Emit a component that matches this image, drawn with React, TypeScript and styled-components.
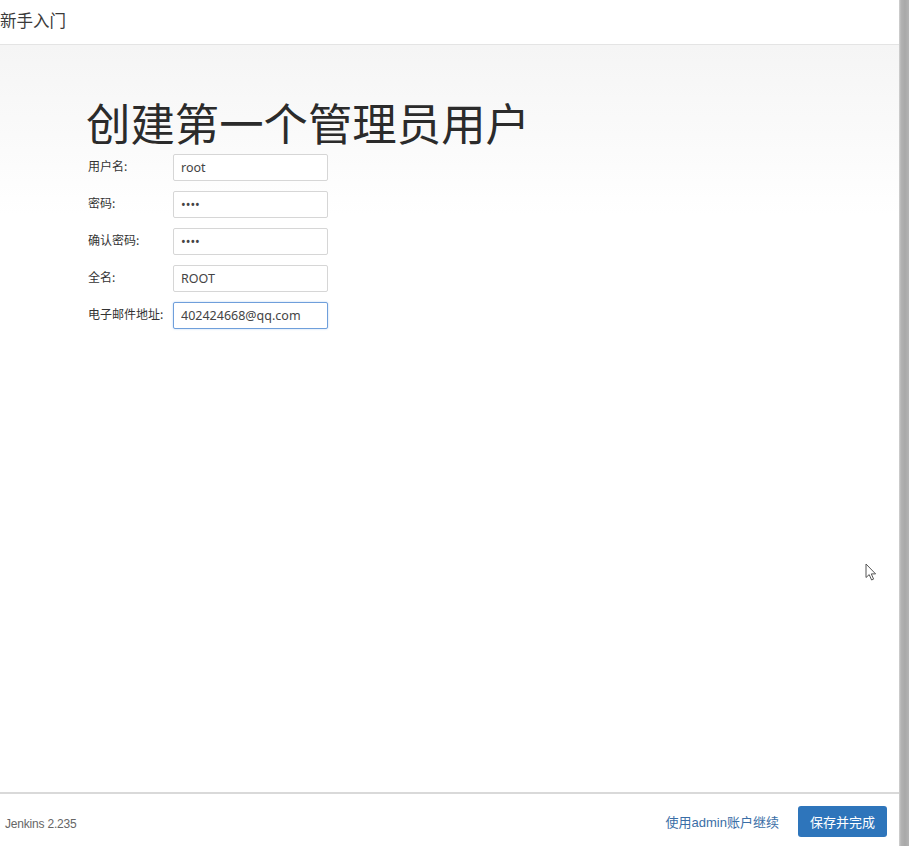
import React from "react";
import styled, { createGlobalStyle } from "styled-components";

const Global = createGlobalStyle`
  html, body { margin: 0; padding: 0; background: #fff; }
  body { font-family: "Noto Sans CJK SC", "Noto Sans", "Liberation Sans", sans-serif; color: #333; }
  * { box-sizing: border-box; }
`;

const Screen = styled.div`
  position: relative;
  display: flex;
  width: 909px;
  height: 846px;
  overflow: hidden;
`;

const Panel = styled.div`
  display: flex;
  flex-direction: column;
  width: 899px;
  height: 100%;
  background: #fff;
`;

const Shade = styled.div`
  width: 10px;
  height: 100%;
  background: linear-gradient(to right, #d2d2d2 0px, #b3b3b3 2px, #a9a9a9 6px, #b4b4b4 10px);
`;

const Header = styled.header`
  display: flex;
  align-items: center;
  height: 45px;
  padding: 0 0 4px 0;
  border-bottom: 1px solid #e4e4e4;
  font-size: 16.5px;
  color: #3a3a3a;
`;

const Content = styled.main`
  flex: 1;
  padding: 53px 0 0 86px;
  background: linear-gradient(#f5f5f5 0px, #fafafa 90px, #ffffff 170px);
`;

const Title = styled.h1`
  margin: 0 0 7px 0;
  font-size: 44.4px;
  line-height: 1.1;
  font-weight: 400;
  color: #2b2b2b;
`;

const Form = styled.div`
  display: grid;
  grid-template-columns: 85px 155px;
  row-gap: 10px;
  margin-left: 2px;
`;

const Label = styled.label`
  display: flex;
  align-items: center;
  height: 27px;
  padding-bottom: 3px;
  font-size: 12px;
  color: #333;
  white-space: nowrap;
`;

const Field = styled.input<{ $focused?: boolean }>`
  width: 155px;
  height: 27px;
  padding: 0 7px;
  border: 1px solid ${(p) => (p.$focused ? "#6f9fdb" : "#d6d6d6")};
  border-radius: 2px;
  box-shadow: ${(p) => (p.$focused ? "0 0 2px rgba(102,160,230,0.5)" : "none")};
  background: #fff;
  font-family: "Noto Sans", "Liberation Sans", sans-serif;
  font-size: 12.5px;
  color: #444;
  outline: none;
`;

const Footer = styled.footer`
  display: flex;
  align-items: center;
  height: 54px;
  padding: 2px 12px 0 5px;
  border-top: 2px solid #d9d9d9;
  background: #fff;
`;

const Version = styled.span`
  margin-top: 5px;
  font-family: "Liberation Sans", sans-serif;
  font-size: 12px;
  letter-spacing: -0.2px;
  color: #666;
`;

const Spacer = styled.div`
  flex: 1;
`;

const SkipLink = styled.a`
  font-family: "Liberation Sans", "Noto Sans CJK SC", sans-serif;
  font-size: 13px;
  color: #3a6ea6;
  text-decoration: none;
  margin-right: 19px;
`;

const PrimaryButton = styled.button`
  width: 89px;
  height: 31px;
  border: none;
  border-radius: 3px;
  background: #2e75bb;
  color: #fff;
  font-family: "Noto Sans CJK SC", sans-serif;
  font-size: 13px;
  padding: 0;
`;

const Cursor = styled.svg`
  position: absolute;
  left: 865px;
  top: 563px;
`;

const rows: { label: string; type: string; value: string; focused?: boolean }[] = [
  { label: "用户名:", type: "text", value: "root" },
  { label: "密码:", type: "password", value: "root" },
  { label: "确认密码:", type: "password", value: "root" },
  { label: "全名:", type: "text", value: "ROOT" },
  { label: "电子邮件地址:", type: "text", value: "402424668@qq.com", focused: true },
];

export default function App() {
  return (
    <>
      <Global />
      <Screen>
        <Panel>
          <Header>新手入门</Header>
          <Content>
            <Title>创建第一个管理员用户</Title>
            <Form>
              {rows.map((r) => (
                <React.Fragment key={r.label}>
                  <Label>{r.label}</Label>
                  <Field type={r.type} defaultValue={r.value} $focused={r.focused} readOnly />
                </React.Fragment>
              ))}
            </Form>
          </Content>
          <Footer>
            <Version>Jenkins 2.235</Version>
            <Spacer />
            <SkipLink href="#">使用admin账户继续</SkipLink>
            <PrimaryButton>保存并完成</PrimaryButton>
          </Footer>
        </Panel>
        <Shade />
        <Cursor width="13" height="19" viewBox="0 0 13 19">
          <path
            d="M1 1 L1 14.5 L4.2 11.6 L6.6 17 L8.6 16.1 L6.3 10.9 L10.6 10.9 Z"
            fill="#fff"
            stroke="#555"
            strokeWidth="1"
            strokeLinejoin="round"
          />
        </Cursor>
      </Screen>
    </>
  );
}
